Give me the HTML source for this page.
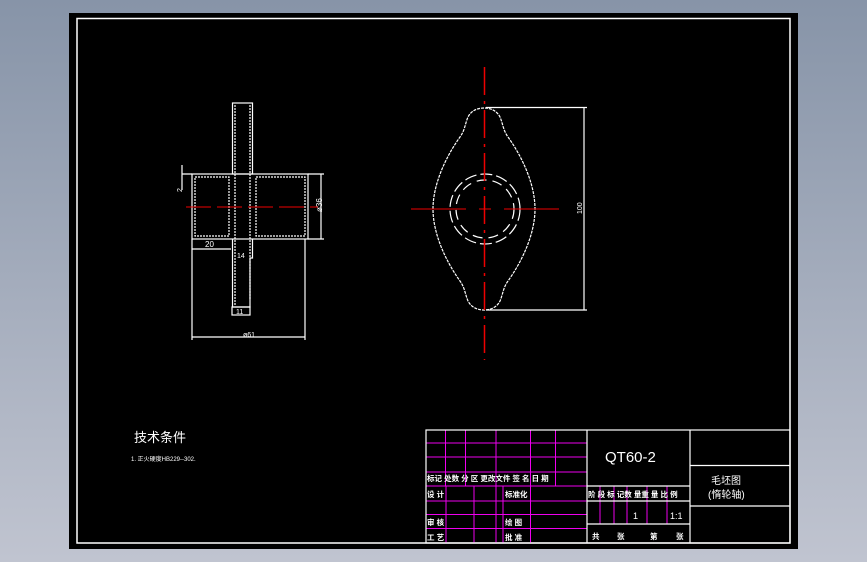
<!DOCTYPE html>
<html><head><meta charset="utf-8"><style>
html,body{margin:0;padding:0;width:867px;height:562px;overflow:hidden;background:linear-gradient(#8794a8,#c0c4d0);}
svg{position:absolute;left:0;top:0}
text{font-family:"Liberation Sans","Noto Sans CJK SC",sans-serif;fill:#fff}
</style></head><body>
<svg width="867" height="562" viewBox="0 0 867 562">
<rect x="69" y="13" width="729" height="536" fill="#000"/>
<rect x="77" y="18.5" width="713" height="524.5" fill="none" stroke="#fff" stroke-width="1.5"/>

<!-- left view -->
<g stroke="#fff" stroke-width="1.2" fill="none">
<rect x="232.5" y="103" width="20" height="71"/>
<rect x="192" y="174" width="116" height="65"/>
<path d="M195 177H229V236H195Z M256 177H305V236H256Z" stroke-dasharray="2 1"/>
<path d="M232.5 239V307H250V258H252.5V239"/>
<path d="M235 105V305 M250 105V300" stroke-dasharray="2 1"/>
<rect x="232" y="307" width="18" height="8"/>
<path d="M192 239V340 M305 239V340 M192 337H305"/>
<path d="M192 249H231 M182 174H192 M182 165V190 M308 174H324 M308 239H324 M321 174V239"/>
</g>
<g stroke="#e00" stroke-width="1" stroke-dasharray="25 6">
<line x1="186" y1="207" x2="318" y2="207"/>
</g>
<text x="205" y="247" font-size="8">20</text>
<text x="237" y="258" font-size="7">14</text>
<text x="236" y="314" font-size="7">11</text>
<text x="243" y="337" font-size="7">ø61</text>
<text x="322" y="212" font-size="8" transform="rotate(-90 322 212)">ø36</text>
<text x="176" y="186" font-size="7" transform="rotate(-90 182 186)">2</text>

<!-- right view -->
<g stroke="#fff" stroke-width="1.2" fill="none">
<path d="M484 108C477 108 471 111 468 117C465 124 465 130 460 137C445 158 433 185 433 209C433 233 445 260 460 281C465 288 465 294 468 301C471 307 477 310 484 310C491 310 497 307 500 301C503 294 503 288 508 281C523 260 535 233 535 209C535 185 523 158 508 137C503 130 503 124 500 117C497 111 491 108 484 108Z" stroke-dasharray="3 1"/>
<circle cx="485" cy="209" r="35" stroke-dasharray="12 4"/>
<circle cx="485" cy="209" r="29" stroke-dasharray="10 6"/>
<path d="M486 107.5H587 M486 310H587 M584 108V310"/>
</g>
<line x1="484.5" y1="67" x2="484.5" y2="360" stroke="#e00" stroke-width="1.5" stroke-dasharray="28 6 3 6"/>
<line x1="411" y1="209" x2="561" y2="209" stroke="#e00" stroke-width="1" stroke-dasharray="55 13 12 13"/>
<text x="582" y="214" font-size="7" transform="rotate(-90 582 214)">100</text>

<!-- notes -->
<text x="134" y="442" font-size="13">技术条件</text>
<text x="131" y="461" font-size="6">1. 正火硬度HB229--302.</text>

<!-- title block -->
<g stroke="#e0e" stroke-width="1">
<path d="M426 443H587 M426 457H587 M426 472H587 M426 486H587 M426 501H587 M426 514.5H587 M426 528.5H587"/>
<path d="M445.5 430V486 M465.5 430V486 M496 430V543 M530.5 430V543 M555.5 430V486 M446 486V543 M474 486V543 M503 486V543"/>
<path d="M600 486V524 M614 486V524 M627 486V524 M647 486V524 M667 486V524"/>
</g>
<g stroke="#fff" stroke-width="1.2" fill="none">
<rect x="426" y="430" width="364" height="113"/>
<path d="M587 430V543 M690 430V543 M587 486H690 M587 501H690 M587 524H690 M690 465.5H790 M690 506H790"/>
</g>
<text x="605" y="462" font-size="15">QT60-2</text>
<g font-size="7.5" font-weight="bold">
<text x="427" y="481">标记 处数  分  区 更改文件  签 名 日   期</text>
<text x="427" y="497">设 计</text>
<text x="505" y="497">标准化</text>
<text x="427" y="525">审 核</text>
<text x="505" y="525">绘 图</text>
<text x="427" y="540">工 艺</text>
<text x="505" y="540">批 准</text>
<text x="588" y="497">阶 段 标 记数 量重 量 比 例</text>
<text x="592" y="539">共</text><text x="617" y="539">张</text><text x="650" y="539">第</text><text x="676" y="539">张</text>
</g>
<text x="633" y="519" font-size="9">1</text>
<text x="670" y="519" font-size="9">1:1</text>
<text x="711" y="484" font-size="10">毛坯图</text>
<text x="708" y="498" font-size="10">(惰轮轴)</text>
</svg>
</body></html>
